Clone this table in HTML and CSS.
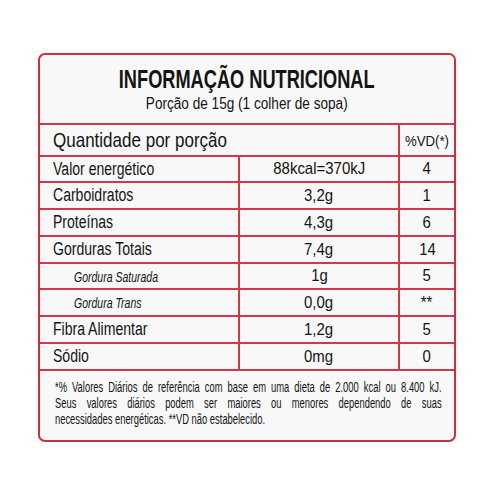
FILE: index.html
```html
<!DOCTYPE html>
<html lang="pt">
<head>
  <meta charset="UTF-8" />
  <title>Informação Nutricional</title>
  <link rel="stylesheet" href="styles.css">
</head>
<body>
  <div class="label">
    <div class="head">
      <h1><span class="t">INFORMAÇÃO NUTRICIONAL</span></h1>
      <p><span class="t">Porção de 15g (1 colher de sopa)</span></p>
    </div>

    <div class="row top">
      <div class="name"><span class="t">Quantidade por porção</span></div>
      <div class="vd"><span class="t">%VD(*)</span></div>
    </div>

    <div class="row short">
      <div class="name"><span class="t">Valor energético</span></div>
      <div class="amount"><span class="t">88kcal=370kJ</span></div>
      <div class="vd"><span class="t">4</span></div>
    </div>
    <div class="row">
      <div class="name"><span class="t">Carboidratos</span></div>
      <div class="amount"><span class="t">3,2g</span></div>
      <div class="vd"><span class="t">1</span></div>
    </div>
    <div class="row">
      <div class="name"><span class="t">Proteínas</span></div>
      <div class="amount"><span class="t">4,3g</span></div>
      <div class="vd"><span class="t">6</span></div>
    </div>
    <div class="row">
      <div class="name"><span class="t">Gorduras Totais</span></div>
      <div class="amount"><span class="t">7,4g</span></div>
      <div class="vd"><span class="t">14</span></div>
    </div>
    <div class="row sub short">
      <div class="name"><span class="t">Gordura Saturada</span></div>
      <div class="amount"><span class="t">1g</span></div>
      <div class="vd"><span class="t">5</span></div>
    </div>
    <div class="row sub">
      <div class="name"><span class="t">Gordura Trans</span></div>
      <div class="amount"><span class="t">0,0g</span></div>
      <div class="vd"><span class="t">**</span></div>
    </div>
    <div class="row">
      <div class="name"><span class="t">Fibra Alimentar</span></div>
      <div class="amount"><span class="t">1,2g</span></div>
      <div class="vd"><span class="t">5</span></div>
    </div>
    <div class="row">
      <div class="name"><span class="t">Sódio</span></div>
      <div class="amount"><span class="t">0mg</span></div>
      <div class="vd"><span class="t">0</span></div>
    </div>

    <!-- rodapé -->
    <div class="note">
      <div class="note-text">
        <div class="line">*% Valores Diários de referência com base em uma dieta de 2.000 kcal ou 8.400 kJ.</div>
        <div class="line">Seus valores diários podem ser maiores ou menores dependendo de suas</div>
        <div class="line last">necessidades energéticas. **VD não estabelecido.</div>
      </div>
    </div>
  </div>
</body>
</html>
```

FILE: styles.css
```css
* {
  margin: 0;
  padding: 0;
  box-sizing: border-box;
}

body {
  background: #fff;
  color: #141414;
  font-family: "Liberation Sans", Arial, sans-serif;
  padding: 53px 0 0 38px;
}

/* texto condensado */
.t {
  display: inline-block;
  white-space: nowrap;
  transform: scaleX(var(--sx, 0.72));
}

.label {
  width: 418px;
  background: #f8f8f8;
  border: 2px solid #c9303f;
  border-radius: 7px;
  box-shadow: 0 0 6px rgba(0, 0, 0, 0.08);
}

.head {
  height: 70px;
  border-bottom: 2px solid #d03a48;
  text-align: center;
  padding-top: 9px;
}

.head h1 {
  font-size: 26px;
  font-weight: bold;
  line-height: 30px;
  --sx: 0.7;
}

.head p {
  font-size: 16px;
  line-height: 18px;
  margin-top: 1px;
  --sx: 0.85;
}

.row {
  display: grid;
  grid-template-columns: 198px 160px 1fr;
  height: 27px;
  border-bottom: 2px solid #d03a48;
  font-size: 18px;
}

.row.short {
  height: 26px;
}

.row > div {
  display: flex;
  align-items: center;
}

.row .name {
  padding-left: 13px;
  --sx: 0.78;
}

.row .name .t {
  transform-origin: left center;
}

.row .amount,
.row .vd {
  justify-content: center;
  border-left: 2px solid #d03a48;
  font-size: 17px;
  --sx: 0.88;
}

.row.top {
  height: 32px;
  grid-template-columns: 358px 1fr;
}

.row.top .name {
  font-size: 21px;
  --sx: 0.81;
}

.row.top .vd {
  font-size: 15px;
}

.row.sub .name {
  padding-left: 34px;
  font-style: italic;
  font-size: 15px;
  --sx: 0.7;
}

.note {
  height: 69px;
  padding: 8px 0 0 15px;
  font-size: 14px;
  line-height: 16px;
}

.note-text {
  width: 577px;
  transform: scaleX(0.67);
  transform-origin: left top;
}

.note .line {
  white-space: nowrap;
  text-align: justify;
  text-align-last: justify;
}

.note .line.last {
  text-align-last: left;
}
```
